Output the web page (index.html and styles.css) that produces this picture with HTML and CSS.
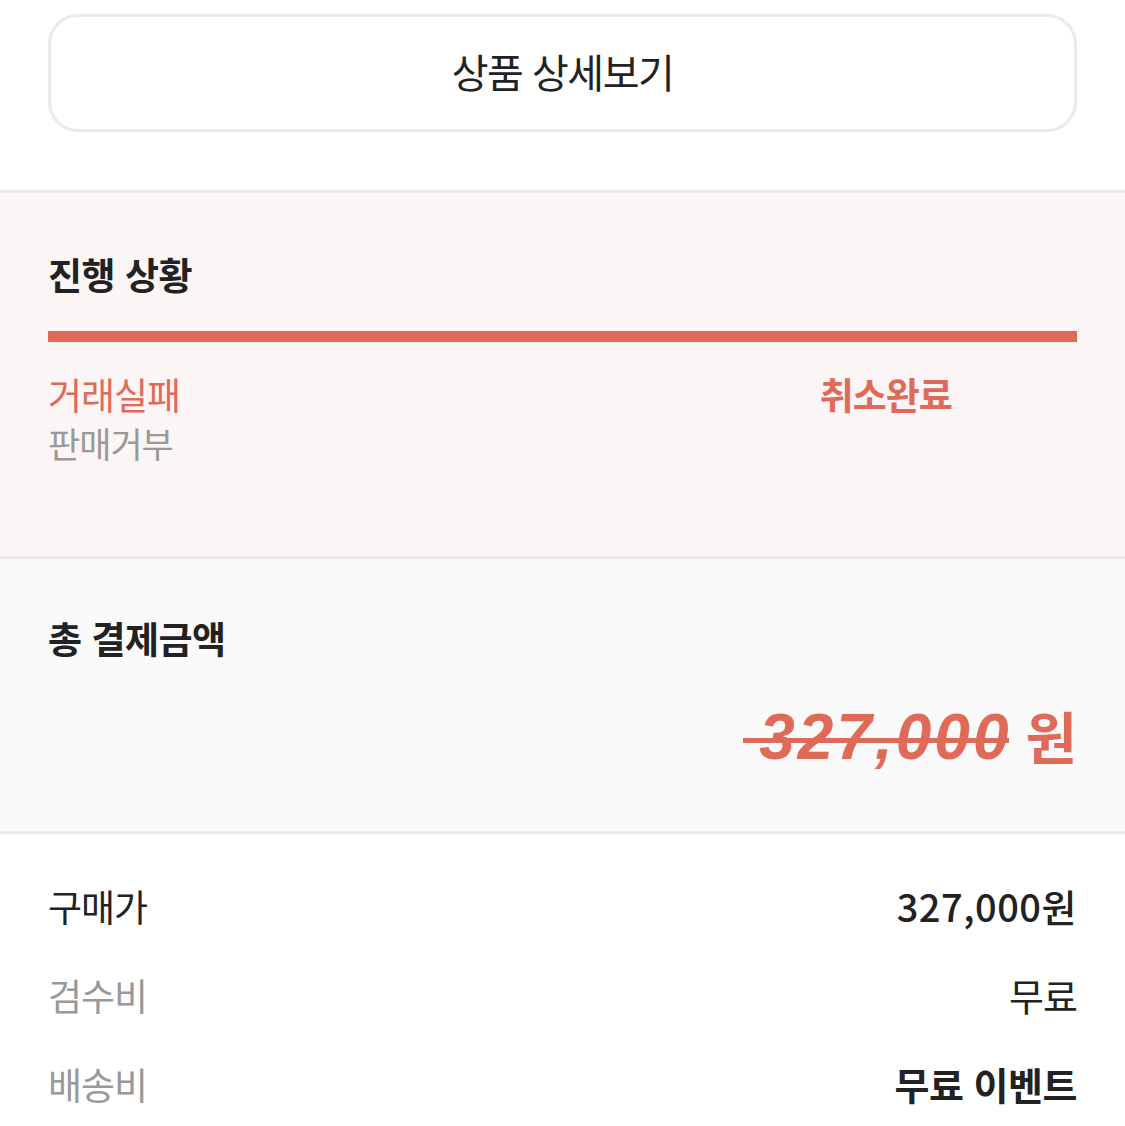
FILE: index.html
```html
<!DOCTYPE html>
<html lang="ko">
<head>
    <meta charset="utf-8">
    <link rel="stylesheet" href="styles.css">
</head>
<body>
    <div class="top">
        <button class="detail-button">상품 상세보기</button>
    </div>

    <section class="progress">
        <h3>진행 상황</h3>
        <div class="progress-bar"></div>
        <div class="steps">
            <div class="step">
                <div class="step-title">거래실패</div>
                <div class="step-sub">판매거부</div>
            </div>
            <div class="step step-last">
                <div class="step-title bold">취소완료</div>
            </div>
        </div>
    </section>

    <section class="total">
        <h3>총 결제금액</h3>
        <div class="total-amount">
            <span class="amount-num">327,000</span>
            <span class="amount-unit">원</span>
        </div>
    </section>

    <section class="details">
        <div class="row">
            <span class="label">구매가</span>
            <span class="value strong">327,000원</span>
        </div>
        <div class="row">
            <span class="label muted">검수비</span>
            <span class="value">무료</span>
        </div>
        <div class="row">
            <span class="label muted">배송비</span>
            <span class="value bold">무료 이벤트</span>
        </div>
    </section>
</body>
</html>
```

FILE: styles.css
```css
body {
    margin: 0;
    width: 1125px;
    font-family: 'Noto Sans CJK KR', 'Noto Sans', sans-serif;
    background: #fff;
    color: #222;
}

.top {
    padding: 14px 48px 58px 48px;
    border-bottom: 3px solid #ebebeb;
}

.detail-button {
    display: block;
    width: 100%;
    height: 118px;
    padding: 0 0 4px 0;
    border: 3px solid #ebebeb;
    border-radius: 30px;
    background: #fff;
    font-family: inherit;
    font-size: 40px;
    color: #222;
    letter-spacing: -1.5px;
}

h3 {
    margin: 0;
    font-size: 37px;
    line-height: 52px;
    font-weight: 700;
    color: #222;
    letter-spacing: -0.5px;
}

.progress {
    background: #fcf5f5;
    padding: 55px 48px 90px 48px;
    border-bottom: 3px solid #ebebeb;
}

.progress-bar {
    height: 11px;
    margin-top: 31px;
    background: #e06a58;
}

.steps {
    display: grid;
    grid-template-columns: repeat(4, 1fr);
    margin-top: 28px;
}

.step-last {
    grid-column: 4;
}

.step-title {
    font-size: 37px;
    line-height: 48px;
    color: #e06a58;
    letter-spacing: -1px;
}

.step-title.bold {
    font-weight: 700;
}

.step-sub {
    margin-top: 2px;
    font-size: 35px;
    line-height: 46px;
    color: #999;
    letter-spacing: -1px;
}

.total {
    background: #fafafa;
    padding: 53px 48px 54px 48px;
    border-bottom: 3px solid #ebebeb;
}

.total-amount {
    display: flex;
    justify-content: flex-end;
    align-items: baseline;
    gap: 14px;
    margin-top: 30px;
    color: #e06a58;
}

.amount-num {
    position: relative;
    font-family: 'Liberation Sans', sans-serif;
    font-size: 64px;
    font-weight: 700;
    font-style: italic;
    letter-spacing: 3px;
    line-height: 80px;
}

.amount-num::after {
    content: '';
    position: absolute;
    left: -16px;
    right: 2px;
    top: 41px;
    height: 5px;
    background: #e06a58;
}

.amount-unit {
    font-size: 56px;
    font-weight: 700;
}

.details {
    padding: 47px 48px 20px 48px;
    display: flex;
    flex-direction: column;
    gap: 40px;
}

.row {
    display: flex;
    justify-content: space-between;
    align-items: center;
    height: 49px;
    font-size: 37px;
    letter-spacing: -1px;
}

.label {
    color: #222;
}

.label.muted {
    color: #999;
}

.value {
    color: #222;
    font-size: 38px;
}

.value.strong {
    font-weight: 500;
    letter-spacing: 0.5px;
}

.value.bold {
    font-weight: 700;
    letter-spacing: -0.5px;
}
```
